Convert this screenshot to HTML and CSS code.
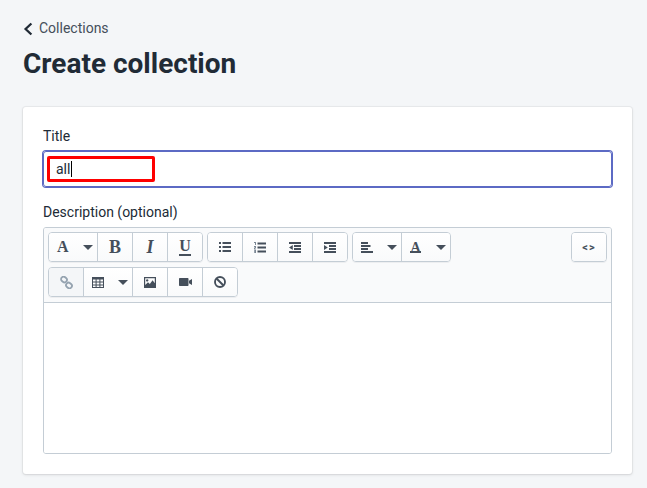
FILE: index.html
```html
<!DOCTYPE html>
<html lang="en">
<head>
<meta charset="utf-8">
<title>Create collection</title>
<link rel="stylesheet" href="styles.css">
</head>
<body>
<main class="page">
  <a class="back" href="#">
    <svg class="back-icon" viewBox="0 0 10 14" width="10" height="14"><path d="M8.400 1.500 2.600 7l5.800 5.500" fill="none" stroke="#212b36" stroke-width="2.300"/></svg>
    <span>Collections</span>
  </a>
  <h1 class="heading">Create collection</h1>
  <section class="card">
    <label class="label">Title</label>
    <div class="input">
      <span class="value">all</span><span class="caret"></span>
      <span class="highlight"></span>
    </div>
    <label class="label label-desc">Description (optional)</label>
    <div class="editor">
      <div class="toolbar">
        <div class="tool-row">
          <div class="group">
            <button class="btn wide"><span class="slot"><span class="g serif bold">A</span></span><span class="arrow"></span></button>
            <button class="btn"><span class="g serif bold big">B</span></button>
            <button class="btn"><span class="g serif bold italic big">I</span></button>
            <button class="btn"><span class="under"><span class="g serif bold">U</span></span></button>
          </div>
          <div class="group">
            <button class="btn"><svg width="12" height="10" viewBox="0 0 12 10"><path fill="#454f5b" d="M0 0h2v2H0zM0 4h2v2H0zM0 8h2v2H0zM3.500 0H12v2H3.500zM3.500 4H12v2H3.500zM3.500 8H12v2H3.500z"/></svg></button>
            <button class="btn"><svg width="12" height="11" viewBox="0 0 12 11"><path fill="#454f5b" d="M3.500 .5H12v2H3.500zM3.500 4.500H12v2H3.500zM3.500 8.500H12v2H3.500z"/><path fill="#7b8794" d="M0 0h2v3H1V1H0zM0 4h2v2H1v.5h1v.9H0V5.500h1V5H0zM0 8h2v3H0v-.8h1v-.4H0v-.8h1v-.2H0z"/></svg></button>
            <button class="btn"><svg width="12" height="11" viewBox="0 0 12 11"><path fill="#454f5b" d="M0 0h12v2H0zM5 3h7v2H5zM5 6h7v2H5zM0 9h12v2H0zM3.800 3v5L0 5.500z"/></svg></button>
            <button class="btn"><svg width="12" height="11" viewBox="0 0 12 11"><path fill="#454f5b" d="M0 0h12v2H0zM5 3h7v2H5zM5 6h7v2H5zM0 9h12v2H0zM0 3v5l3.800-2.500z"/></svg></button>
          </div>
          <div class="group">
            <button class="btn wide"><span class="slot"><svg width="12" height="11" viewBox="0 0 12 11"><path fill="#454f5b" d="M0 0h7v2H0zM0 3h9.500v2H0zM0 6h7v2H0zM0 9h12v2H0z"/></svg></span><span class="arrow"></span></button>
            <button class="btn wide"><span class="slot"><span class="color-a"><span class="g serif bold small">A</span></span></span><span class="arrow"></span></button>
          </div>
          <div class="group code">
            <button class="btn"><span class="code-text">&lt;&gt;</span></button>
          </div>
        </div>
        <div class="tool-row">
          <div class="group">
            <button class="btn active"><svg width="13" height="13" viewBox="0 0 13 13"><g fill="none" stroke="#95a3b0" stroke-width="1.800"><rect x="1" y="1" width="6" height="5" rx="2.400" transform="rotate(40 4 3.500)"/><rect x="6" y="7" width="6" height="5" rx="2.400" transform="rotate(40 9 9.500)"/></g></svg></button>
            <button class="btn wide"><span class="slot"><svg width="12" height="11" viewBox="0 0 12 11"><path fill="#454f5b" fill-rule="evenodd" d="M0 0h12v11H0zM1 2.500v2h2.600v-2zM4.600 2.500v2h2.800v-2zM8.400 2.500v2H11v-2zM1 5.500v2h2.600v-2zM4.600 5.500v2h2.800v-2zM8.400 5.500v2H11v-2zM1 8.500V10h2.600V8.500zM4.600 8.500V10h2.800V8.500zM8.400 8.500V10H11V8.500z"/></svg></span><span class="arrow"></span></button>
            <button class="btn"><svg width="12" height="11" viewBox="0 0 12 11"><path fill="#454f5b" fill-rule="evenodd" d="M0 0h12v11H0zM1.200 1.200v6.800l2.800-2.800 1.800 1.800 2.800-3.800 2.200 3V1.200zM3.200 2.200a1.200 1.200 0 1 0 .01 0z"/></svg></button>
            <button class="btn"><svg width="13" height="8" viewBox="0 0 13 8"><path fill="#454f5b" d="M.8 0h7.900a.8.800 0 0 1 .8.800v6.400a.8.800 0 0 1-.8.800H.8a.8.800 0 0 1-.8-.8V.8A.8.800 0 0 1 .8 0zM10 2.800 13 1v6l-3-1.800z"/></svg></button>
            <button class="btn"><svg width="12" height="12" viewBox="0 0 12 12"><g fill="none" stroke="#454f5b" stroke-width="1.900"><circle cx="6" cy="6" r="5"/><path d="M2.500 2.500l7 7"/></g></svg></button>
          </div>
        </div>
      </div>
      <div class="area"></div>
    </div>
  </section>
</main>
</body>
</html>
```

FILE: styles.css
```css
* { box-sizing: border-box; }
html, body { margin: 0; height: 100%; }
body {
  background: #f4f6f8;
  color: #212b36;
  font-family: Roboto, "Liberation Sans", sans-serif;
  overflow: hidden;
}
.page { padding: 20px 15px 14px 23px; }
.back {
  display: flex;
  align-items: center;
  gap: 6px;
  height: 17px;
  color: #454f5b;
  font-size: 14px;
  line-height: 17px;
  text-decoration: none;
}
.back-icon { display: block; }
.heading {
  margin: 9px 0 0;
  height: 35px;
  font-size: 28px;
  line-height: 35px;
  font-weight: 700;
  color: #212b36;
}
.card {
  margin-top: 26px;
  height: 367px;
  padding: 20px;
  background: #fff;
  border-radius: 3px;
  box-shadow: 0 0 0 1px rgba(63,63,68,.05), 0 1px 3px 0 rgba(63,63,68,.15);
}
.label {
  display: block;
  height: 18px;
  font-size: 14px;
  line-height: 18px;
  color: #212b36;
}
.label-desc { margin-top: 16px; }
.input {
  position: relative;
  display: flex;
  align-items: center;
  margin-top: 6px;
  height: 36px;
  padding-left: 12px;
  border: 1px solid #5c6ac4;
  border-radius: 3px;
  box-shadow: 0 0 0 1px #5c6ac4;
  font-size: 14px;
  color: #212b36;
}
.caret { width: 1px; height: 16px; margin-left: 1px; background: #000; }
.highlight {
  position: absolute;
  left: 3px;
  top: 4px;
  width: 108px;
  height: 26px;
  border: 3px solid #f00;
  border-radius: 2px;
}
.editor {
  margin-top: 6px;
  height: 227px;
  border: 1px solid #c4cdd5;
  border-radius: 3px;
  display: flex;
  flex-direction: column;
  overflow: hidden;
}
.toolbar {
  height: 75px;
  padding: 4px 4px 0;
  background: #f9fafb;
  border-bottom: 1px solid #c4cdd5;
  display: flex;
  flex-direction: column;
  gap: 5px;
}
.tool-row { display: flex; gap: 4px; }
.group {
  display: flex;
  height: 30px;
  border: 1px solid #c4cdd5;
  border-radius: 4px;
  box-shadow: 0 1px 0 rgba(22,29,37,.05);
  overflow: hidden;
}
.code { margin-left: auto; }
.btn {
  display: flex;
  align-items: center;
  justify-content: center;
  flex: none;
  width: 35px;
  height: 28px;
  padding: 0;
  border: 0;
  border-left: 1px solid #c4cdd5;
  background: linear-gradient(#fff, #f9fafb);
  color: #454f5b;
  font-family: inherit;
}
.btn:first-child { width: 34px; border-left: 0; }
.btn.wide { width: 49px; justify-content: flex-start; padding-left: 8px; }
.btn.wide:first-child { width: 48px; }
.btn.active { background: #f4f6f8; }
.slot { display: flex; align-items: center; flex: none; width: 26px; }
.g { display: block; font-size: 16px; line-height: 1; font-weight: 700; }
.serif { font-family: "Liberation Serif", serif; }
.bold { font-weight: 700; }
.italic { font-style: italic; }
.big { font-size: 18px; }
.under { display: block; border-bottom: 2px solid #454f5b; line-height: 11px; }
.small { font-size: 14px; }
.color-a {
  display: block;
  width: 11px;
  height: 12px;
  line-height: 10px;
  text-align: center;
  border-bottom: 2px solid #454f5b;
}
.arrow {
  flex: none;
  width: 0;
  height: 0;
  border-left: 5px solid transparent;
  border-right: 5px solid transparent;
  border-top: 5px solid #454f5b;
}
.code-text { font-size: 11px; font-weight: 700; letter-spacing: 1px; }
.area { flex: 1; background: #fff; }
```
